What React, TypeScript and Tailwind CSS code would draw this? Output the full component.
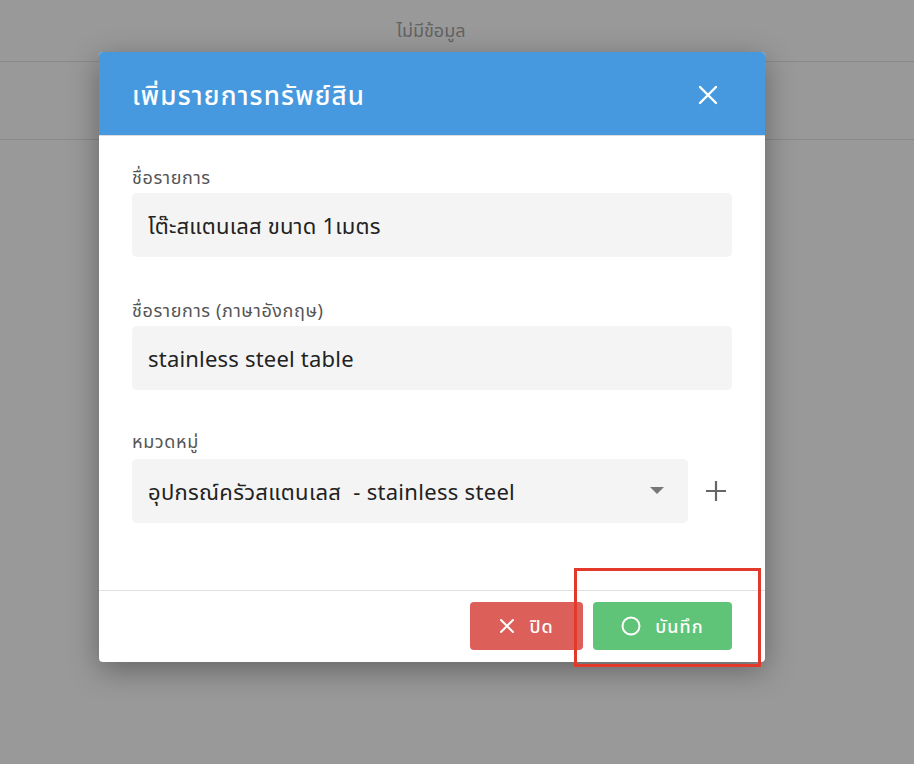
import React from "react";

export default function App() {
  const font = { fontFamily: '"Noto Sans", "Noto Sans Thai", "Liberation Sans", sans-serif' };
  return (
    <div className="relative w-[914px] h-[764px] overflow-hidden bg-white" style={font}>
      {/* page behind */}
      <div className="flex flex-col">
        <div className="h-[62px] flex items-center justify-center pr-[52px] border-b border-[#e4e4e4] text-[18px] text-[#a6a6a6]">
          ไม่มีข้อมูล
        </div>
        <div className="h-[78px] border-b border-[#e4e4e4]" />
      </div>
      {/* overlay */}
      <div className="absolute inset-0 bg-black/40" />
      {/* modal */}
      <div className="absolute left-[99px] top-[52px] w-[666px] rounded-[4px] bg-white shadow-[0_8px_30px_rgba(0,0,0,0.35)] overflow-hidden flex flex-col">
        <div className="h-[84px] bg-[#4699df] flex items-center justify-between pl-[33px] pr-[46px] pt-[3px] border-b border-[#dcdcdc]">
          <span className="text-[26px] tracking-[1.2px] text-white font-medium">เพิ่มรายการทรัพย์สิน</span>
          <svg width="22" height="22" viewBox="0 0 22 22" fill="none" stroke="white" strokeWidth="2.4" strokeLinecap="round">
            <path d="M3 3 L19 19 M19 3 L3 19" />
          </svg>
        </div>
        <div className="flex flex-col px-[33px] pt-[28px] pb-[67px]">
          <label className="text-[18px] tracking-[0.6px] text-[#555] leading-[26px]">ชื่อรายการ</label>
          <div className="mt-[3px] h-[64px] bg-[#f4f4f4] rounded-[5px] flex items-center px-[16px] text-[22px] tracking-[0.2px] text-[#222]">
            โต๊ะสแตนเลส ขนาด 1เมตร
          </div>
          <label className="mt-[40px] text-[18px] tracking-[0.6px] text-[#555] leading-[26px]">ชื่อรายการ (ภาษาอังกฤษ)</label>
          <div className="mt-[3px] h-[64px] bg-[#f4f4f4] rounded-[5px] flex items-center px-[16px] text-[22px] tracking-[0.2px] text-[#222]">
            stainless steel table
          </div>
          <label className="mt-[38px] text-[18px] tracking-[0.6px] text-[#555] leading-[26px]">หมวดหมู่</label>
          <div className="mt-[5px] flex items-center">
            <div className="w-[556px] h-[64px] bg-[#f4f4f4] rounded-[5px] flex items-center justify-between pl-[16px] pr-[24px] text-[22px] tracking-[0.3px] text-[#222]">
              <span className="whitespace-pre">อุปกรณ์ครัวสแตนเลส  - stainless steel</span>
              <svg width="14" height="8" viewBox="0 0 14 8"><path d="M0 0 L14 0 L7 7 Z" fill="#777" /></svg>
            </div>
            <div className="flex-1 flex items-center justify-center pl-[12px]">
              <svg width="22" height="22" viewBox="0 0 22 22" stroke="#666" strokeWidth="2.2"><path d="M11 1 V21 M1 11 H21" /></svg>
            </div>
          </div>
        </div>
        <div className="border-t border-[#e0e0e0] h-[72px] flex items-start pt-[11px] justify-end gap-[10px] pr-[33px]">
          <button className="w-[113px] h-[48px] rounded-[4px] bg-[#dc5f5a] text-white flex items-center justify-center gap-[14px] text-[18px] tracking-[1px] font-medium">
            <svg width="16" height="16" viewBox="0 0 16 16" stroke="white" strokeWidth="2" strokeLinecap="round"><path d="M2 2 L14 14 M14 2 L2 14" /></svg>
            ปิด
          </button>
          <button className="w-[139px] h-[48px] rounded-[4px] bg-[#5fc477] text-white flex items-center justify-center gap-[14px] text-[18px] tracking-[1px] font-medium">
            <svg width="20" height="20" viewBox="0 0 20 20" fill="none" stroke="white" strokeWidth="2"><circle cx="10" cy="10" r="8.5" /></svg>
            บันทึก
          </button>
        </div>
      </div>
      {/* annotation */}
      <div className="absolute left-[574px] top-[568px] w-[187px] h-[99px] border-[3px] border-[#e3392a]" />
    </div>
  );
}
